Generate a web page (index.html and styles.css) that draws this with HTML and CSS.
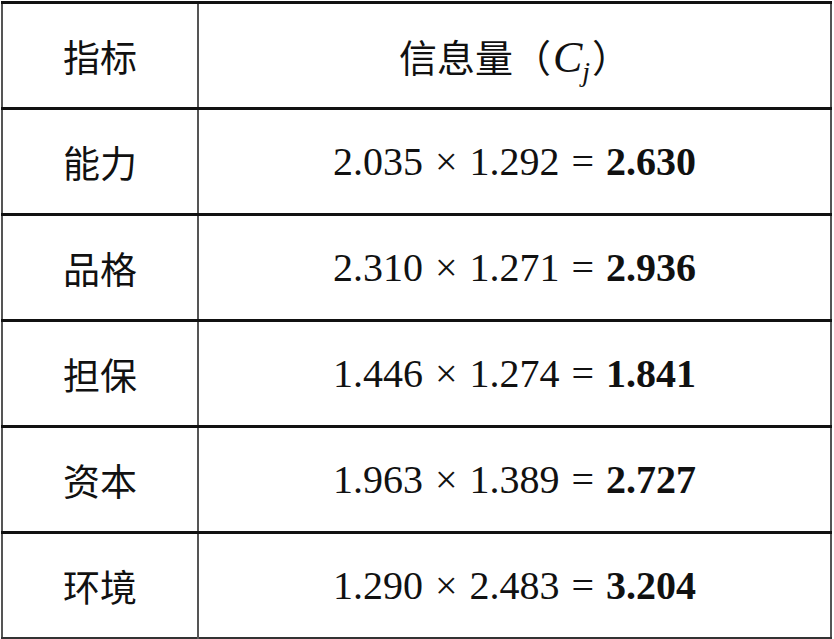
FILE: index.html
```html
<!DOCTYPE html>
<html lang="zh">
<head>
<meta charset="utf-8">
<link rel="stylesheet" href="styles.css">
</head>
<body>
<table class="info-table">
  <tr class="head-row">
    <th class="col-name">指标</th>
    <th class="col-value">信息量（<span class="math">C<sub>j</sub></span>）</th>
  </tr>
  <tr><td class="col-name">能力</td><td class="col-value num">2.035 × 1.292 = <b>2.630</b></td></tr>
  <tr><td class="col-name">品格</td><td class="col-value num">2.310 × 1.271 = <b>2.936</b></td></tr>
  <tr><td class="col-name">担保</td><td class="col-value num">1.446 × 1.274 = <b>1.841</b></td></tr>
  <tr><td class="col-name">资本</td><td class="col-value num">1.963 × 1.389 = <b>2.727</b></td></tr>
  <tr><td class="col-name">环境</td><td class="col-value num">1.290 × 2.483 = <b>3.204</b></td></tr>
</table>
</body>
</html>
```
FILE: styles.css
```css
html, body {
  margin: 0;
  padding: 0;
  background: #ffffff;
}
.info-table {
  margin: 1px 0 0 1px;
  width: 831px;
  border-collapse: collapse;
  border-top: 3px solid #111;
  border-left: 2px solid #555;
  border-right: 2px solid #555;
  border-bottom: 2px solid #333;
  color: #111;
}
.info-table th,
.info-table td {
  height: 103px;
  padding: 0;
  text-align: center;
  vertical-align: middle;
  font-weight: normal;
  border-top: 3px solid #111;
}
.col-name {
  width: 194px;
  border-right: 2px solid #555;
  font-family: "Noto Sans CJK SC", sans-serif;
  font-size: 37px;
  font-weight: 300;
}
.col-value {
  font-family: "Noto Sans CJK SC", sans-serif;
  font-size: 38px;
  font-weight: 300;
}
.math {
  font-family: "Liberation Serif", serif;
  font-style: italic;
  font-size: 44px;
  padding: 0 2px;
}
.math sub {
  font-size: 28px;
  vertical-align: -9px;
  line-height: 0;
}
.num {
  font-family: "Liberation Serif", serif;
  font-size: 40px;
  font-weight: normal;
  word-spacing: 2px;
}
.num b {
  font-weight: bold;
}
```
